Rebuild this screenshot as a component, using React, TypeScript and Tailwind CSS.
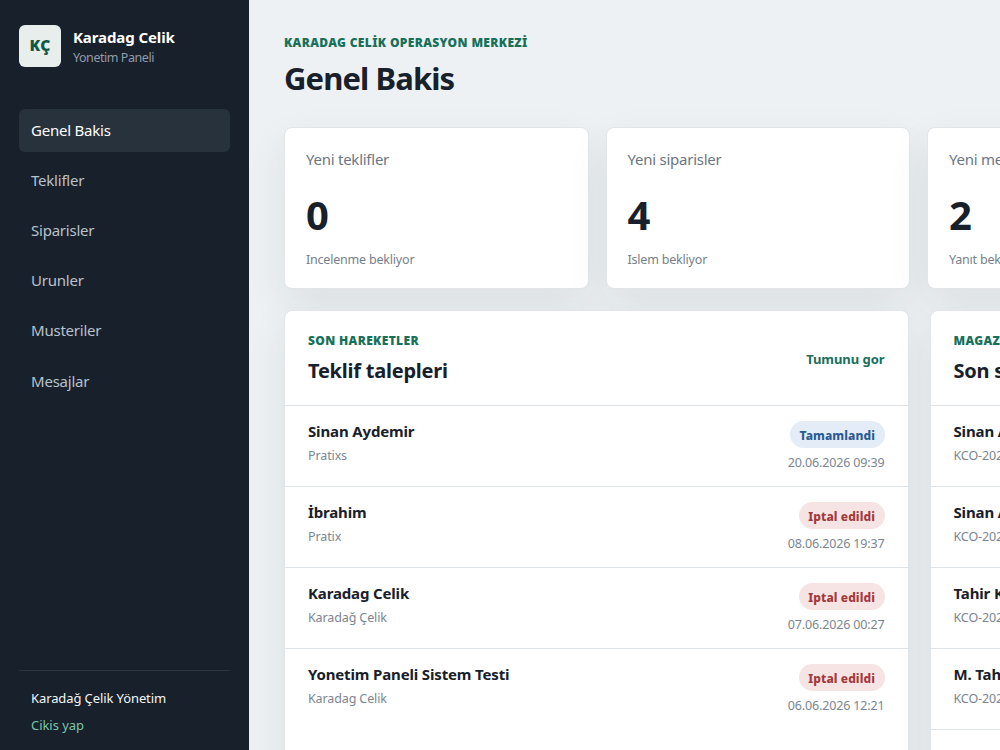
const navItems = ["Genel Bakis", "Teklifler", "Siparisler", "Urunler", "Musteriler", "Mesajlar"];

const stats = [
  { label: "Yeni teklifler", value: "0", note: "Incelenme bekliyor" },
  { label: "Yeni siparisler", value: "4", note: "Islem bekliyor" },
  { label: "Yeni mesajlar", value: "2", note: "Yanıt bekliyor" },
];

type Row = { name: string; detail: string; status: string; tone: "blue" | "red"; date: string };

const quotes: Row[] = [
  { name: "Sinan Aydemir", detail: "Pratixs", status: "Tamamlandi", tone: "blue", date: "20.06.2026 09:39" },
  { name: "İbrahim", detail: "Pratix", status: "Iptal edildi", tone: "red", date: "08.06.2026 19:37" },
  { name: "Karadag Celik", detail: "Karadağ Çelik", status: "Iptal edildi", tone: "red", date: "07.06.2026 00:27" },
  { name: "Yonetim Paneli Sistem Testi", detail: "Karadag Celik", status: "Iptal edildi", tone: "red", date: "06.06.2026 12:21" },
];

const orders = [
  { name: "Sinan Aydemir", detail: "KCO-2026" },
  { name: "Sinan Aydemir", detail: "KCO-2026" },
  { name: "Tahir K", detail: "KCO-2026" },
  { name: "M. Tahir", detail: "KCO-2026" },
  { name: "Karadag Celik", detail: "KCO-2026" },
];

const tones = {
  blue: "bg-[#e4edf7] text-[#2b5a92]",
  red: "bg-[#f6e4e4] text-[#a3393b]",
};

const surface = "shrink-0 rounded-[8px] border border-[#e1e5e9] bg-white shadow-[0_16px_42px_rgba(24,32,43,0.08)]";

function PanelHeader({ eyebrow, title, link }: { eyebrow: string; title: string; link?: string }) {
  return (
    <div className="flex h-[94px] items-center justify-between px-[23px]">
      <div className="flex flex-col">
        <span className="text-[12px] leading-[18px] font-black tracking-[0.36px] text-[#16705a]">{eyebrow}</span>
        <h2 className="mt-[7px] text-[20px] leading-[28px] font-bold tracking-[-0.23px]">{title}</h2>
      </div>
      {link && <a className="mt-[2px] text-[13px] leading-[18px] font-bold tracking-[-0.05px] text-[#16705a]">{link}</a>}
    </div>
  );
}

function Person({ name, detail }: { name: string; detail: string }) {
  return (
    <div className="flex flex-col pt-[14px]">
      <strong className="text-[15px] leading-[22px] font-bold tracking-[-0.15px]">{name}</strong>
      <span className="mt-[4px] text-[12.5px] leading-[20px] tracking-[-0.12px] text-[#7b8592]">{detail}</span>
    </div>
  );
}

export default function App() {
  return (
    <div className="flex h-[750px] w-[1000px] overflow-hidden bg-[#edf1f4] font-['Noto_Sans',sans-serif] whitespace-nowrap text-[#18202b]">
      <aside className="flex w-[249px] shrink-0 flex-col bg-[#18202b] px-[19px] pt-[25px]">
        <div className="flex h-[42px] items-center gap-3">
          <div className="flex size-[42px] items-center justify-center rounded-[6px] bg-[#e8eeeb] text-[15.5px] font-black tracking-[0.2px] text-[#0f5846]">KÇ</div>
          <div className="flex flex-col">
            <strong className="text-[15px] leading-[22px] font-bold tracking-[-0.1px] text-white">Karadag Celik</strong>
            <span className="text-[12.5px] leading-[19px] tracking-[-0.45px] text-[#929ca8]">Yonetim Paneli</span>
          </div>
        </div>
        <nav className="mt-[41.7px] flex flex-col gap-[6.7px]">
          {navItems.map((item, i) => (
            <a
              key={item}
              className={`flex h-[43.5px] items-center rounded-[6px] px-3 pb-px text-[15px] tracking-[-0.22px] ${i === 0 ? "bg-[#27323d] text-white" : "text-[#bac2cb]"}`}
            >
              {item}
            </a>
          ))}
        </nav>
        <div className="mt-auto flex h-[80px] flex-col border-t border-[#2b343e] px-3 pt-[17px]">
          <span className="text-[13px] leading-[20px] tracking-[-0.1px] text-[#f3f5f6]">Karadağ Çelik Yönetim</span>
          <a className="mt-[7px] text-[13px] leading-[20px] tracking-[-0.05px] text-[#7cc4a8]">Cikis yap</a>
        </div>
      </aside>

      <main className="min-w-0 flex-1 pt-[34px] pl-[35px]">
        <header className="flex h-[93px] flex-col">
          <span className="text-[12px] leading-[18px] font-black tracking-[0.36px] text-[#16705a]">KARADAG CELİK OPERASYON MERKEZİ</span>
          <h1 className="mt-[4px] text-[31px] leading-[44px] font-bold tracking-[-0.9px]">Genel Bakis</h1>
        </header>

        <section className="flex gap-[17px]">
          {stats.map((s) => (
            <article key={s.label} className={`${surface} flex h-[162px] w-[304.5px] flex-col px-[21px] pt-[20px]`}>
              <span className="text-[15px] leading-[22px] tracking-[-0.25px] text-[#6b7683]">{s.label}</span>
              <strong className="mt-[19px] text-[40px] leading-[52px] font-bold">{s.value}</strong>
              <span className="mt-[9px] text-[12.5px] leading-[20px] tracking-[-0.2px] text-[#75808c]">{s.note}</span>
            </article>
          ))}
        </section>

        <section className="mt-[21px] flex gap-[21px]">
          <article className={`${surface} h-[520px] w-[624.5px]`}>
            <PanelHeader eyebrow="SON HAREKETLER" title="Teklif talepleri" link="Tumunu gor" />
            {quotes.map((r) => (
              <div key={r.date} className="flex h-[81px] justify-between border-t border-[#dfe4e8] px-[23px]">
                <Person name={r.name} detail={r.detail} />
                <div className="flex flex-col items-end pt-[15px]">
                  <span className={`${tones[r.tone]} h-[27px] rounded-full px-[9.5px] text-[12px] leading-[29px] font-extrabold tracking-[0.08px]`}>{r.status}</span>
                  <time className="mt-[5px] text-[12.5px] leading-[20px] tracking-[-0.15px] text-[#7b8592]">{r.date}</time>
                </div>
              </div>
            ))}
          </article>
          <article className={`${surface} h-[520px] w-[625px]`}>
            <PanelHeader eyebrow="MAGAZA" title="Son siparisler" />
            {orders.map((r, i) => (
              <div key={i} className="flex h-[81px] border-t border-[#dfe4e8] px-[23px]">
                <Person name={r.name} detail={r.detail} />
              </div>
            ))}
          </article>
        </section>
      </main>
    </div>
  );
}
